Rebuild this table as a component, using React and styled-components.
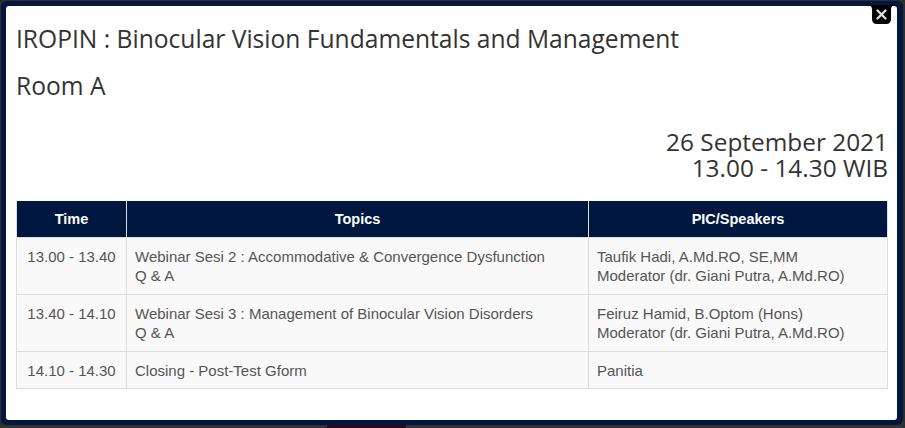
import React from 'react'
import styled, { createGlobalStyle } from 'styled-components'

const GlobalStyle = createGlobalStyle`
  html, body {
    margin: 0;
    padding: 0;
    background: #2d2d2d;
  }
  * { box-sizing: border-box; }
`;

const Page = styled.div`
  width: 905px;
  height: 428px;
  display: flex;
  flex-direction: column;
  padding: 1px 2px 0 1px;
  overflow: hidden;
`;

const Popup = styled.div`
  position: relative;
  height: 424px;
  background: #02173d;
  border-radius: 6px;
  padding: 5px 6px 5px 5px;
`;

const Panel = styled.div`
  height: 100%;
  background: #fff;
  border-radius: 3px;
  padding: 15px 9px 0 10px;
  font-family: "Open Sans", "Liberation Sans", sans-serif;
  color: #333;
`;

const Close = styled.button`
  position: absolute;
  top: 4px;
  right: 8px;
  width: 27px;
  height: 20px;
  border: 0;
  padding: 0;
  background: none;
  cursor: pointer;
  svg { display: block; }
`;

const Title = styled.h2`
  margin: 0;
  font-size: 24.6px;
  font-weight: 400;
  line-height: 47px;
  &:first-child {
    margin-top: -6px;
  }
`;

const When = styled.div`
  text-align: right;
  font-size: 24.4px;
  line-height: 26px;
  margin-top: 20px;
`;

const Table = styled.table`
  width: 100%;
  margin-top: 20px;
  border-collapse: collapse;
  font-family: "Liberation Sans", Arial, sans-serif;
  font-size: 15px;
  color: #555;
`;

const Th = styled.th`
  background: #00173f;
  color: #fff;
  font-weight: 700;
  font-size: 14.5px;
  text-align: center;
  padding: 8px;
  line-height: 20px;
  border: 1px solid #dddddd;
  border-top: 0;
  width: ${(props) => props.w || 'auto'};
`;

const Td = styled.td`
  background: #f9f9f9;
  border: 1px solid #dddddd;
  padding: 9px 8px 8px 8px;
  line-height: 19.4px;
  vertical-align: top;
  text-align: ${(props) => (props.center ? 'center' : 'left')};
`;

const rows = [
  {
    time: '13.00 - 13.40',
    topics: ['Webinar Sesi 2 : Accommodative & Convergence Dysfunction', 'Q & A'],
    pic: ['Taufik Hadi, A.Md.RO, SE,MM', 'Moderator (dr. Giani Putra, A.Md.RO)'],
  },
  {
    time: '13.40 - 14.10',
    topics: ['Webinar Sesi 3 : Management of Binocular Vision Disorders', 'Q & A'],
    pic: ['Feiruz Hamid, B.Optom (Hons)', 'Moderator (dr. Giani Putra, A.Md.RO)'],
  },
  {
    time: '14.10 - 14.30',
    topics: ['Closing - Post-Test Gform'],
    pic: ['Panitia'],
  },
];

const Lines = ({ items }) =>
  items.map((t, i) => (
    <React.Fragment key={i}>
      {i > 0 && <br />}
      {t}
    </React.Fragment>
  ));

const BottomStrip = styled.div`
  flex: 1;
  display: flex;
  margin-left: -1px;
`;

const Seg = styled.div`
  width: ${(props) => props.w};
  flex: ${(props) => (props.w ? 'none' : 1)};
  background: ${(props) => props.c};
`;

const App = () => {
  return (
    <>
      <GlobalStyle />
      <Page>
        <Popup>
          <Panel>
            <Title>IROPIN : Binocular Vision Fundamentals and Management</Title>
            <Title>Room A</Title>
            <When>
              26 September 2021
              <br />
              13.00 - 14.30 WIB
            </When>
            <Table>
              <thead>
                <tr>
                  <Th w="110px">Time</Th>
                  <Th w="462px">Topics</Th>
                  <Th>PIC/Speakers</Th>
                </tr>
              </thead>
              <tbody>
                {rows.map((r) => (
                  <tr key={r.time}>
                    <Td center>{r.time}</Td>
                    <Td>
                      <Lines items={r.topics} />
                    </Td>
                    <Td>
                      <Lines items={r.pic} />
                    </Td>
                  </tr>
                ))}
              </tbody>
            </Table>
          </Panel>
          <Close aria-label="Close">
            <svg width="27" height="20" viewBox="0 0 27 20">
              <path
                d="M0 0 H27 Q23 0 23 5 V14 Q23 19 18 19 H9 Q4 19 4 14 V5 Q4 0 0 0 Z"
                fill="#000"
              />
              <path
                d="M9.5 5.5 L17.5 13.5 M17.5 5.5 L9.5 13.5"
                stroke="#ddd"
                strokeWidth="2.4"
                strokeLinecap="round"
              />
            </svg>
          </Close>
        </Popup>
        <BottomStrip>
          <Seg w="327px" c="#333" />
          <Seg w="79px" c="#2a0a1a" />
          <Seg c="#333" />
        </BottomStrip>
      </Page>
    </>
  );
};

export default App
